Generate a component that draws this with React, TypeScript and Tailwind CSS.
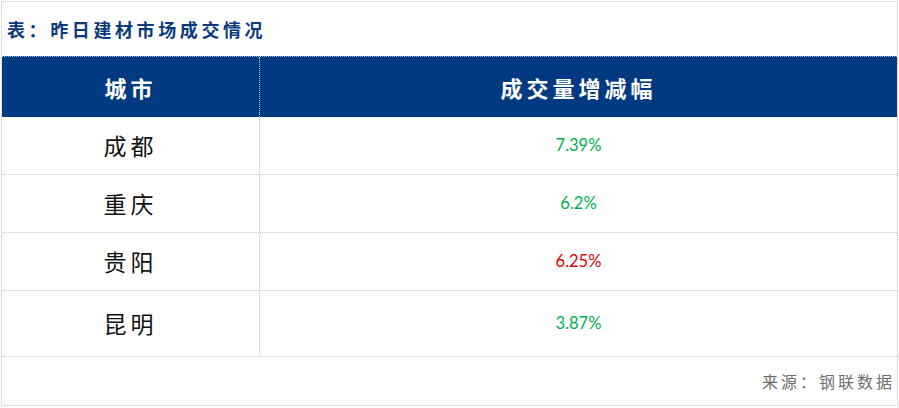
const rows = [
  { city: "成都", value: "7.39%", up: true, h: "h-[58px]" },
  { city: "重庆", value: "6.2%", up: true, h: "h-[58px]" },
  { city: "贵阳", value: "6.25%", up: false, h: "h-[58px]" },
  { city: "昆明", value: "3.87%", up: true, h: "h-[66px]" },
];

const cjk = "font-['Noto_Sans_CJK_SC',sans-serif]";

export default function App() {
  return (
    <div className="w-[899px] h-[408px] bg-white pl-[1px] pt-[1px]">
      <div className="w-[897px] h-[405px] border border-dotted border-[#c4c4c4] flex flex-col">
        <div className={`h-[54px] flex items-center pl-[5px] text-[18px] font-bold text-[#0b3a7e] tracking-[3.6px] ${cjk}`}>
          表：昨日建材市场成交情况
        </div>
        <div className={`h-[61px] flex bg-[#013a81] text-white text-[22px] font-bold border-t border-dotted border-[#9fb4d6] ${cjk}`}>
          <div className="w-[258px] flex items-center justify-center tracking-[4px] border-r border-dotted border-[#c9d4ea]">城市</div>
          <div className="flex-1 flex items-center justify-center tracking-[4px]">成交量增减幅</div>
        </div>
        {rows.map((r) => (
          <div key={r.city} className={`${r.h} flex border-b border-dotted border-[#c4c4c4]`}>
            <div className={`w-[258px] flex items-center justify-center text-[23px] text-[#111] tracking-[4px] border-r border-dotted border-[#c4c4c4] ${cjk}`}>
              {r.city}
            </div>
            <div
              className={`flex-1 flex items-center justify-center text-[16.5px] font-['Lato',sans-serif] ${
                r.up ? "text-[#00b050]" : "text-[#e00000]"
              }`}
            >
              {r.value}
            </div>
          </div>
        ))}
        <div className={`flex-1 flex items-center justify-end pr-[2px] text-[16px] text-[#6e6e6e] tracking-[3px] ${cjk}`}>
          来源：钢联数据
        </div>
      </div>
    </div>
  );
}
